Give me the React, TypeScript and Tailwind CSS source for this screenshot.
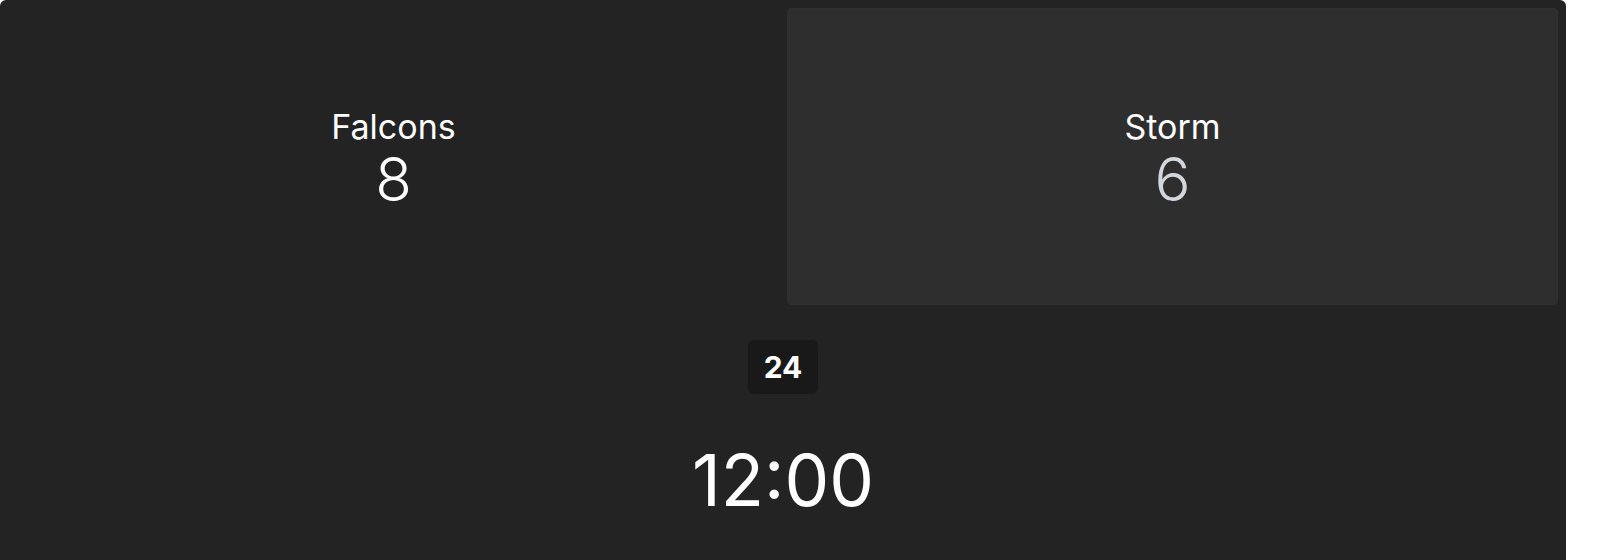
import React from "react";

type Team = { name: string; score: number; active?: boolean };

const teams: Team[] = [
  { name: "Falcons", score: 8 },
  { name: "Storm", score: 6, active: true },
];

function TeamCard({ team }: { team: Team }) {
  return (
    <div
      className={`flex flex-col items-center justify-center rounded-sm pt-[4px] ${
        team.active ? "border border-[#303030] bg-[#2e2e2e]" : "bg-[#232323]"
      }`}
    >
      <span className="text-[34px] leading-[40px] text-white">{team.name}</span>
      <span
        className={`mt-[1px] text-[60px] font-light leading-[62px] ${team.active ? "text-[#d3d7dd]" : "text-white"}`}
      >
        {team.score}
      </span>
    </div>
  );
}

export default function App() {
  return (
    <div className="min-h-[560px] bg-white" style={{ fontFamily: "Inter, 'Liberation Sans', sans-serif" }}>
      <div className="h-[560px] w-[1566px] rounded-t-md bg-[#232323] p-2">
        <div className="grid h-[297px] grid-cols-2 gap-2">
          {teams.map((t) => (
            <TeamCard key={t.name} team={t} />
          ))}
        </div>

        <div className="flex flex-col items-center">
          <div className="mt-[35px] rounded-md bg-[#191919] px-4 py-[9px] text-[30px] font-bold leading-9 text-white">
            24
          </div>
          <div className="mt-[46px] text-[71px] leading-[80px] text-white">12:00</div>
        </div>
      </div>
    </div>
  );
}
